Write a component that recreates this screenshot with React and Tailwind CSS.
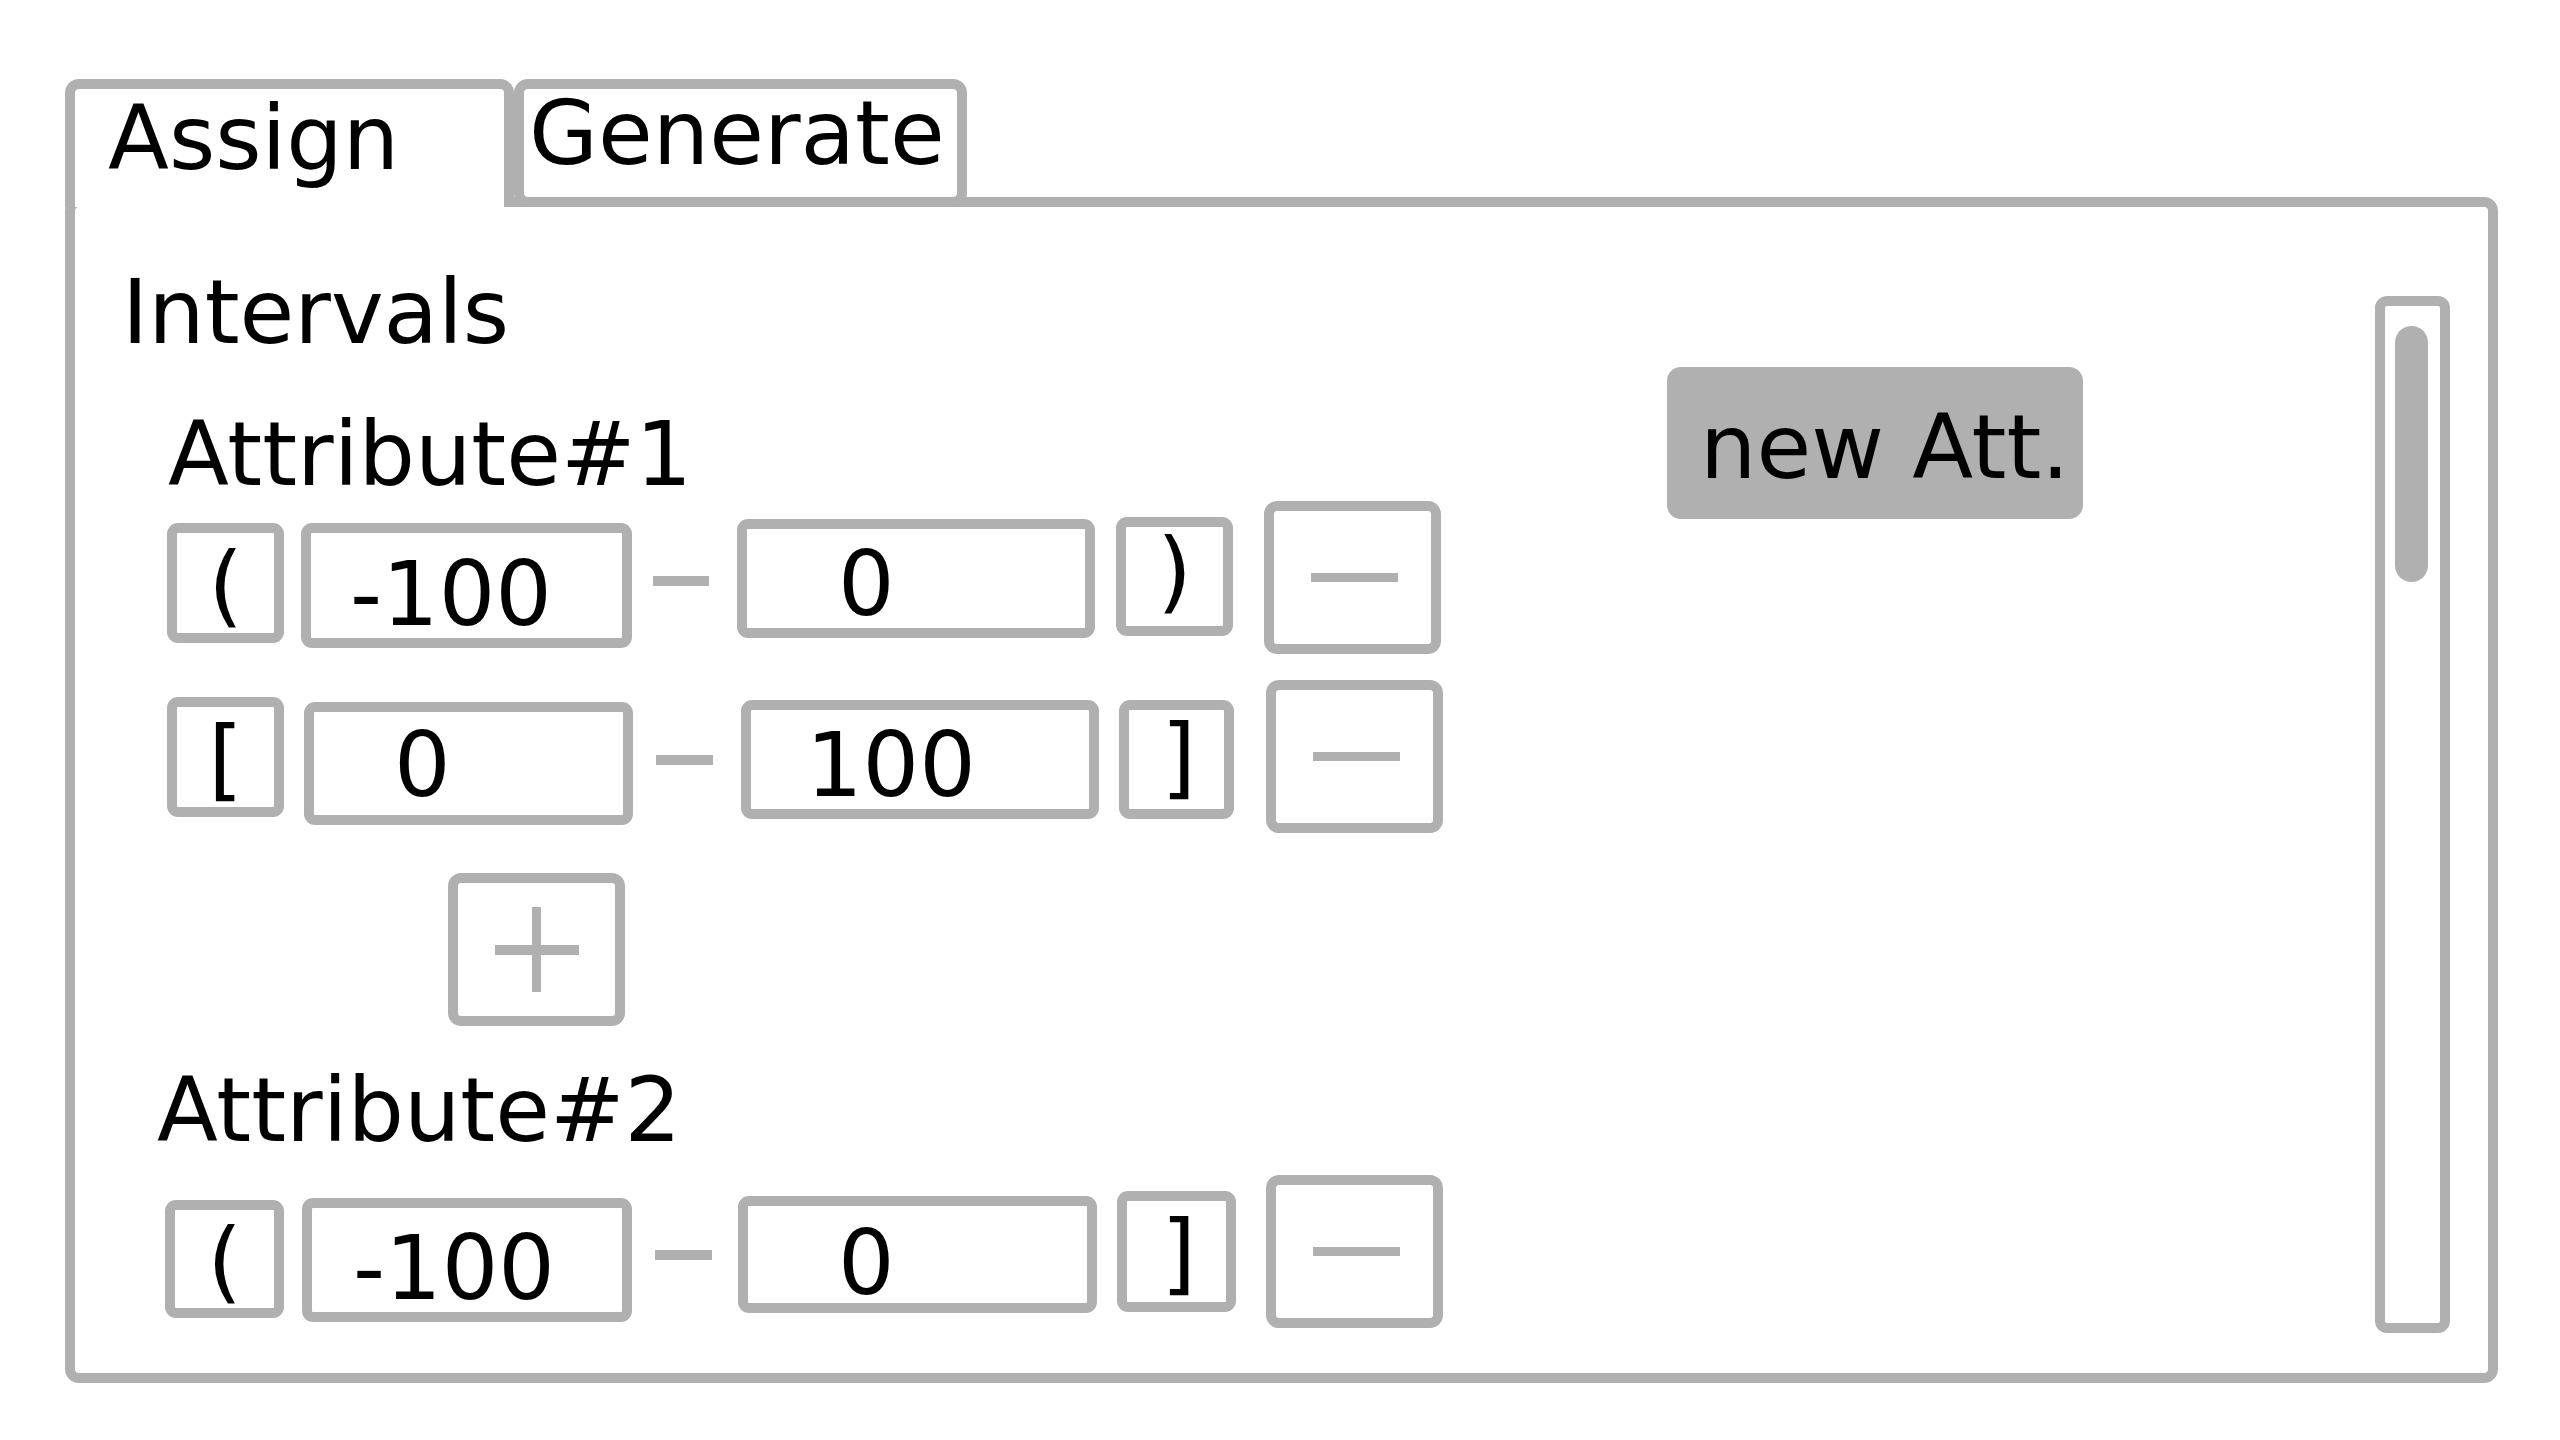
import React from 'react';

const line = 'border-[10px] border-[#b0b0b0]';

function Field({ className, textClass, children }) {
  return (
    <div className={`shrink-0 bg-white ${line} rounded-[11px] ${className}`}>
      <div className={textClass}>{children}</div>
    </div>
  );
}

function Dash({ className }) {
  return <div className={`mt-[75px] h-[10px] shrink-0 bg-[#b0b0b0] ${className}`} />;
}

function MinusButton({ className }) {
  return (
    <div className={`flex h-[153px] w-[177px] shrink-0 items-center justify-center ${line} rounded-[13px] ${className}`}>
      <div className="ml-[4px] h-[9px] w-[87px] bg-[#b0b0b0]" />
    </div>
  );
}

function PlusButton() {
  return (
    <div className={`relative ml-[373px] mt-[40px] flex h-[153px] w-[177px] shrink-0 items-center justify-center ${line} rounded-[13px]`}>
      <div className="h-[10px] w-[84px] bg-[#b0b0b0]" />
      <div className="absolute h-[85px] w-[9px] bg-[#b0b0b0]" />
    </div>
  );
}

export default function App() {
  return (
    <div className="h-[1440px] w-[2560px] bg-white pl-[65px] pt-[79px] font-['DejaVu_Sans','Liberation_Sans',sans-serif] text-[89px] leading-none text-black">
      {/* Tabs */}
      <div className="flex items-end">
        <div className={`relative z-10 -mb-[10px] h-[128px] w-[449px] ${line} rounded-t-[14px] border-b-0 bg-white pl-[33px] pt-[5px]`}>
          Assign
        </div>
        <div className={`relative z-10 -mb-[10px] h-[128px] w-[453px] ${line} rounded-[14px] bg-white pl-[5px]`}>
          Generate
        </div>
      </div>

      {/* Panel */}
      <div className={`flex h-[1186px] w-[2433px] ${line} rounded-[14px]`}>
        <div className="flex w-[1592px] shrink-0 flex-col">
          <div className="ml-[47px] mt-[61px]">Intervals</div>

          <div className="ml-[93px] mt-[53px]">Attribute#1</div>
          <div className="ml-[92px] mt-[2px] flex items-start">
            <Field className="mt-[22px] h-[120px] w-[117px]" textClass="pt-[8px] text-center">(</Field>
            <Field className="ml-[17px] mt-[22px] h-[125px] w-[331px]" textClass="pl-[39px] pt-[17px]">-100</Field>
            <Dash className="ml-[21px] w-[56px]" />
            <Field className="ml-[28px] mt-[18px] h-[119px] w-[358px]" textClass="pl-[91px] pt-[11px]">0</Field>
            <Field className="ml-[21px] mt-[16px] h-[119px] w-[117px]" textClass="pt-0 text-center">)</Field>
            <MinusButton className="ml-[31px]" />
          </div>

          <div className="ml-[92px] mt-[26px] flex items-start">
            <Field className="mt-[17px] h-[120px] w-[117px]" textClass="pt-[8px] text-center">[</Field>
            <Field className="ml-[20px] mt-[22px] h-[123px] w-[329px]" textClass="pl-[80px] pt-[9px]">0</Field>
            <Dash className="ml-[23px] w-[57px]" />
            <Field className="ml-[28px] mt-[20px] h-[119px] w-[358px]" textClass="pl-[55px] pt-[11px]">100</Field>
            <Field className="ml-[20px] mt-[20px] h-[119px] w-[115px]" textClass="pl-[4px] pt-[3px] text-center">]</Field>
            <MinusButton className="ml-[32px]" />
          </div>

          <PlusButton />

          <div className="ml-[82px] mt-[40px]">Attribute#2</div>
          <div className="ml-[90px] mt-[20px] flex items-start">
            <Field className="mt-[25px] h-[118px] w-[119px]" textClass="pt-[7px] text-center">(</Field>
            <Field className="ml-[18px] mt-[23px] h-[124px] w-[330px]" textClass="pl-[41px] pt-[16px]">-100</Field>
            <Dash className="ml-[23px] w-[57px]" />
            <Field className="ml-[26px] mt-[21px] h-[117px] w-[359px]" textClass="pl-[90px] pt-[13px]">0</Field>
            <Field className="ml-[20px] mt-[16px] h-[121px] w-[119px]" textClass="pl-[4px] pt-[8px] text-center">]</Field>
            <MinusButton className="ml-[30px]" />
          </div>
        </div>

        <div className="mt-[160px] h-[152px] w-[416px] shrink-0 whitespace-nowrap rounded-[14px] bg-[#b0b0b0] pl-[33px] pt-[36px]">
          new Att.
        </div>

        {/* Scrollbar */}
        <div className={`ml-[292px] mt-[89px] h-[1037px] w-[75px] shrink-0 ${line} rounded-[12px]`}>
          <div className="ml-[10px] mt-[20px] h-[256px] w-[33px] rounded-full bg-[#b0b0b0]" />
        </div>
      </div>
    </div>
  );
}
